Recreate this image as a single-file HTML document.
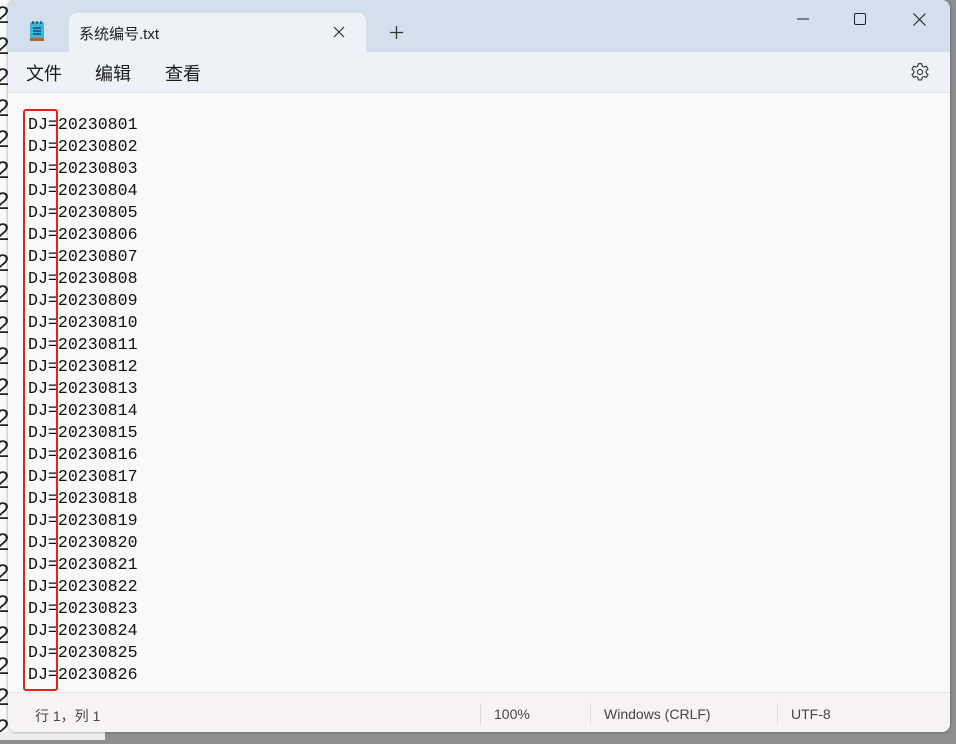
<!DOCTYPE html>
<html><head><meta charset="utf-8"><style>
body{margin:0;width:956px;height:740px;background:#8f8f8f;position:relative;overflow:hidden;font-family:"Liberation Sans","Noto Sans CJK SC",sans-serif}
.bgnum{position:absolute;left:-4px;top:0;font:24px "Liberation Sans",sans-serif;color:#222;line-height:31px;background:#fafafa;width:20px;height:740px}
.bot{position:absolute;left:0;top:732px;width:105px;height:8px;background:#eee}
.win{position:absolute;left:8px;top:0;width:942px;height:732px;background:#f9f9f9;border-radius:8px;overflow:hidden;box-shadow:0 0 3px rgba(0,0,0,.4)}
.title{position:absolute;left:0;top:0;width:100%;height:52px;background:#d3dfec}
.tab{position:absolute;left:61px;top:13px;width:297px;height:39px;background:#eef2f7;border-radius:8px 8px 0 0}
.menu{position:absolute;left:0;top:52px;width:100%;height:40px;background:#eef2f7;border-bottom:1px solid #e2e4e8}
.menu span{position:absolute;top:8px;font-size:18px;color:#1a1a1a}
.ed{position:absolute;left:20px;top:114px;font:16.6px/22px "Liberation Mono",monospace;color:#111;white-space:pre}
.box{position:absolute;left:15px;top:109px;width:31px;height:578px;border:2px solid #e2231a;border-radius:3px}
.status{position:absolute;left:0;top:692px;width:100%;height:40px;background:#f8f3f3;border-top:1px solid #ebe6e6;font-size:14px;color:#444}
.status span{position:absolute;top:13px}
.sep{position:absolute;top:10px;width:1px;height:22px;background:#ddd}
</style></head><body>
<div class="bgnum">2<br>2<br>2<br>2<br>2<br>2<br>2<br>2<br>2<br>2<br>2<br>2<br>2<br>2<br>2<br>2<br>2<br>2<br>2<br>2<br>2<br>2<br>2<br>2</div>
<div class="bot"></div>
<div class="win">
<div class="title">
 <svg style="position:absolute;left:21px;top:20px" width="16" height="22" viewBox="0 0 16 22"><rect x="1" y="2" width="14" height="17" rx="2" fill="#3bb5d8"/><rect x="1" y="18" width="14" height="3" fill="#b5651d"/><path d="M4 8h8M4 11h8M4 14h8" stroke="#1d4f7a" stroke-width="1.5"/><path d="M4 1v3M8 1v3M12 1v3" stroke="#1d4f7a" stroke-width="1.5"/></svg>
 <div class="tab"><span style="position:absolute;left:10px;top:10px;font-size:15px;color:#222">系统编号.txt</span>
 <svg style="position:absolute;left:264px;top:13px" width="12" height="12"><path d="M1 1L11 11M11 1L1 11" stroke="#333" stroke-width="1.2"/></svg></div>
 <svg style="position:absolute;left:382px;top:26px" width="13" height="13"><path d="M6.5 0V13M0 6.5H13" stroke="#333" stroke-width="1.3"/></svg>
 <svg style="position:absolute;left:789px;top:18px" width="12" height="2"><path d="M0 1H12" stroke="#222" stroke-width="1"/></svg>
 <svg style="position:absolute;left:846px;top:13px" width="12" height="12"><rect x=".5" y=".5" width="11" height="11" rx="1.5" fill="none" stroke="#222"/></svg>
 <svg style="position:absolute;left:905px;top:13px" width="13" height="13"><path d="M.5 .5L12.5 12.5M12.5 .5L.5 12.5" stroke="#222" stroke-width="1.1"/></svg>
</div>
<div class="menu"><span style="left:18px">文件</span><span style="left:87px">编辑</span><span style="left:157px">查看</span>
<svg style="position:absolute;left:902px;top:10px" width="20" height="20" viewBox="0 0 18 18"><path d="M7.5 1.5h3l.5 2.2 1.6.9 2.1-.8 1.5 2.6-1.7 1.5v1.8l1.7 1.5-1.5 2.6-2.1-.8-1.6.9-.5 2.2h-3l-.5-2.2-1.6-.9-2.1.8-1.5-2.6 1.7-1.5V7.9L1.8 6.4l1.5-2.6 2.1.8 1.6-.9z" fill="none" stroke="#333" stroke-width="1"/><circle cx="9" cy="9" r="2.3" fill="none" stroke="#333" stroke-width="1"/></svg></div>
<div class="ed">DJ=20230801
DJ=20230802
DJ=20230803
DJ=20230804
DJ=20230805
DJ=20230806
DJ=20230807
DJ=20230808
DJ=20230809
DJ=20230810
DJ=20230811
DJ=20230812
DJ=20230813
DJ=20230814
DJ=20230815
DJ=20230816
DJ=20230817
DJ=20230818
DJ=20230819
DJ=20230820
DJ=20230821
DJ=20230822
DJ=20230823
DJ=20230824
DJ=20230825
DJ=20230826</div>
<div class="box"></div>
<div class="status"><span style="left:27px">行 1，列 1</span><div class="sep" style="left:472px"></div><span style="left:486px">100%</span><div class="sep" style="left:582px"></div><span style="left:596px">Windows (CRLF)</span><div class="sep" style="left:769px"></div><span style="left:783px">UTF-8</span></div>
</div>
</body></html>
